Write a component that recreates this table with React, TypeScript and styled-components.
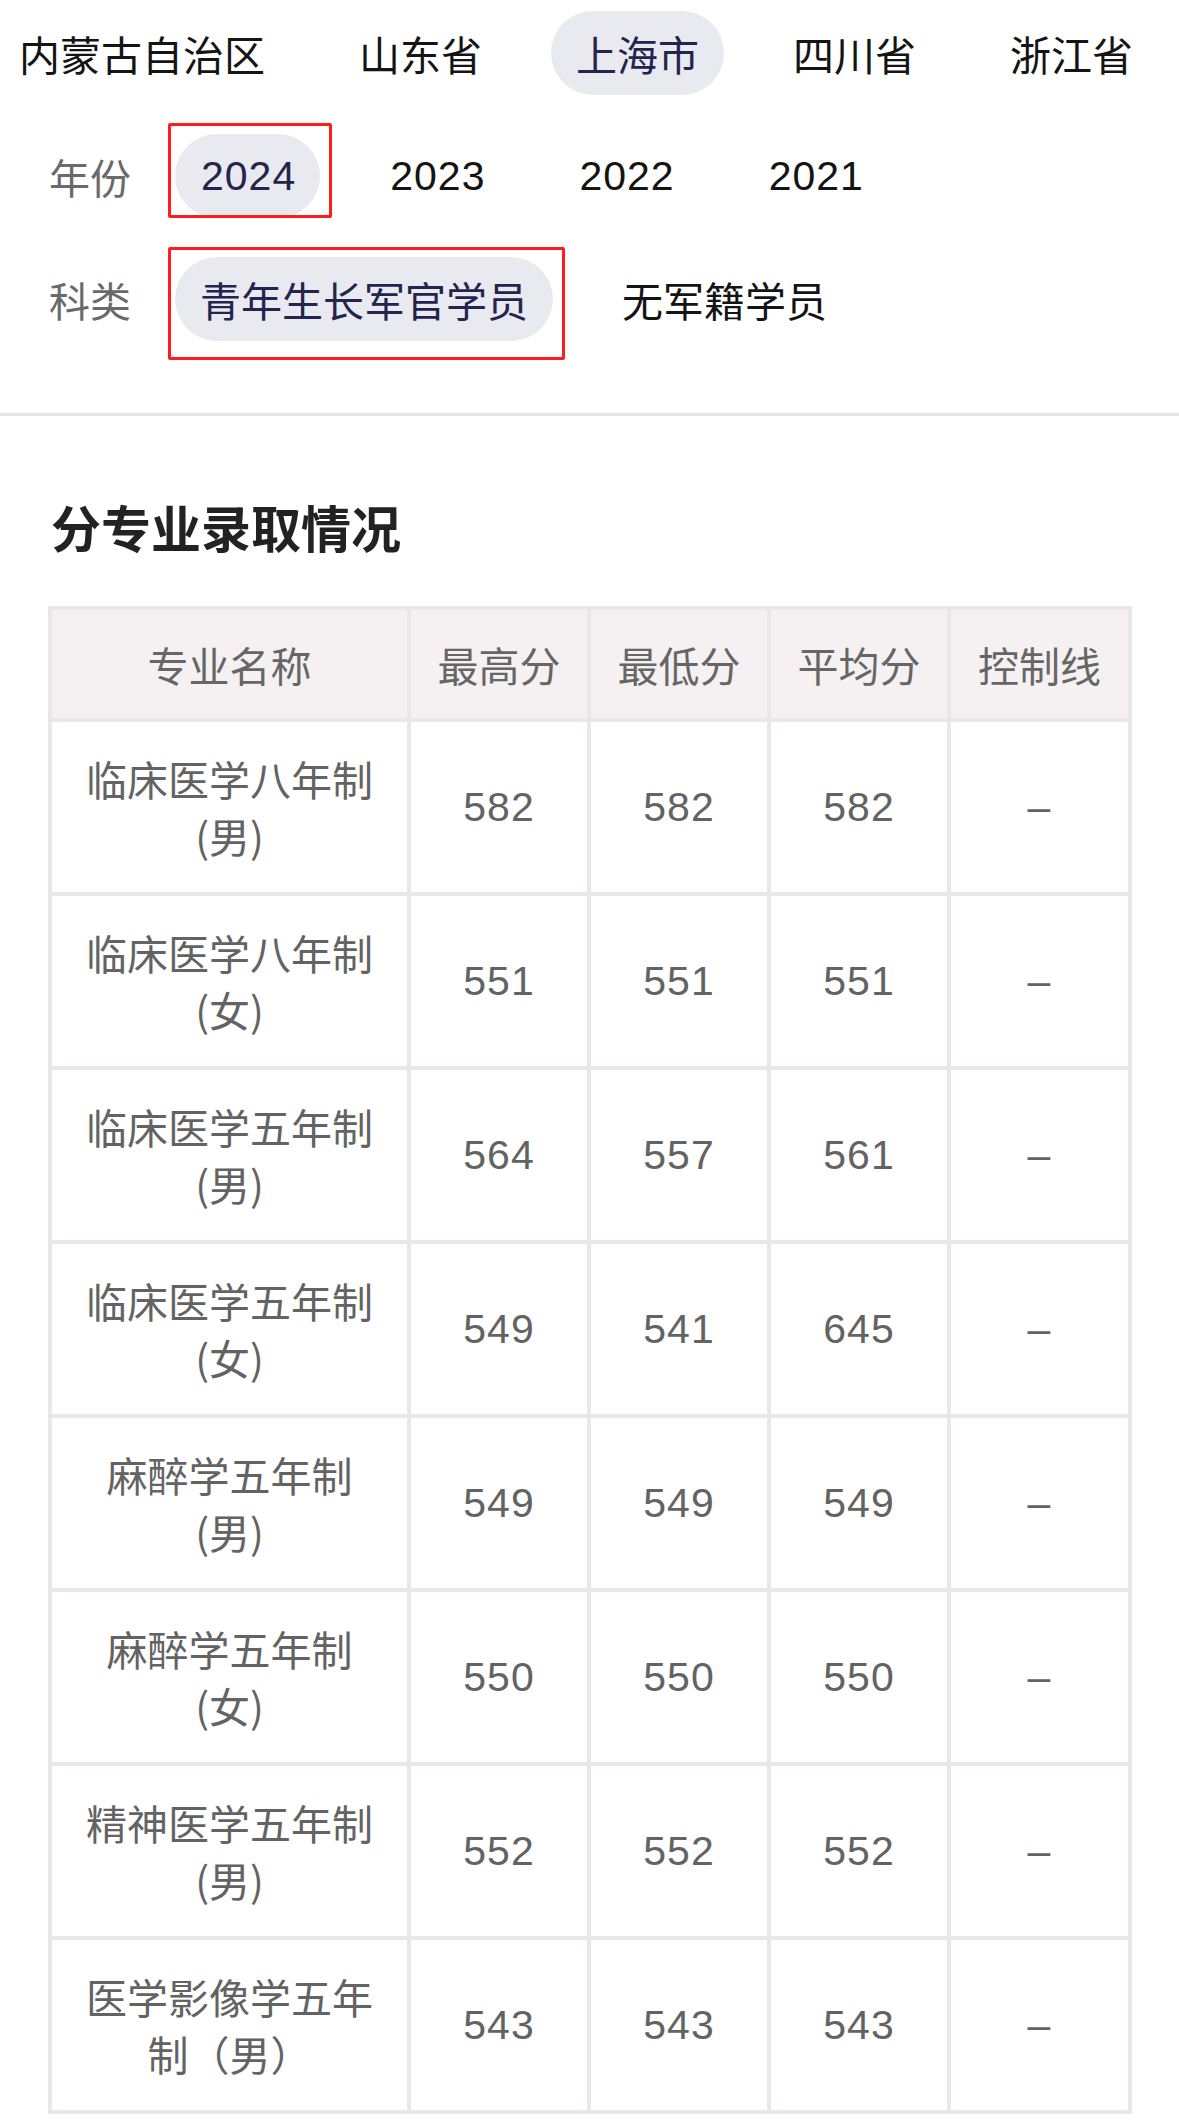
import React from "react";
import styled, { createGlobalStyle } from "styled-components";

const GlobalStyle = createGlobalStyle`
  html, body {
    margin: 0;
    padding: 0;
    background: #ffffff;
  }
  body {
    font-family: "Noto Sans", "Noto Sans CJK SC", sans-serif;
    -webkit-font-smoothing: antialiased;
  }
`;

const Page = styled.div`
  width: 1179px;
  overflow: hidden;
  background: #ffffff;
`;

const FilterPanel = styled.div`
  display: flex;
  flex-direction: column;
  gap: 39px;
  padding: 11px 0 72px;
`;

const ChipRow = styled.div<{ $indent: number }>`
  display: flex;
  align-items: center;
  gap: 44px;
  margin-left: ${(p) => p.$indent}px;
  height: 84px;
`;

const RowLabel = styled.span`
  font-family: "Noto Sans CJK SC", sans-serif;
  font-size: 41px;
  line-height: 84px;
  color: #6a6a6a;
  white-space: nowrap;
`;

const Chip = styled.span<{ $active?: boolean; $numeric?: boolean }>`
  position: relative;
  display: inline-flex;
  align-items: center;
  justify-content: center;
  height: 84px;
  padding: ${(p) => (p.$numeric ? "0 24px 0 26px" : "0 25px")};
  border-radius: 42px;
  font-family: "Liberation Sans", "Noto Sans CJK SC", sans-serif;
  font-size: 41px;
  letter-spacing: ${(p) => (p.$numeric ? "1px" : "0")};
  white-space: nowrap;
  color: ${(p) => (p.$active ? "#24244f" : "#141414")};
  background: ${(p) => (p.$active ? "#e9e9f0" : "transparent")};
`;

const Annotation = styled.span<{ $t: number; $r: number; $b: number; $l: number }>`
  position: absolute;
  top: ${(p) => p.$t}px;
  right: ${(p) => p.$r}px;
  bottom: ${(p) => p.$b}px;
  left: ${(p) => p.$l}px;
  border: 3px solid #ff1c1c;
  border-radius: 2px;
  pointer-events: none;
`;

const Divider = styled.div`
  height: 3px;
  background: #e6e6e6;
`;

const Section = styled.section`
  padding: 80px 0 40px 48px;
`;

const SectionTitle = styled.h2`
  margin: 0 0 50px;
  padding-left: 3px;
  font-family: "Noto Sans CJK SC", sans-serif;
  font-size: 50px;
  line-height: 60px;
  font-weight: 700;
  color: #222222;
`;

const ScoreTable = styled.table`
  width: 1080px;
  table-layout: fixed;
  border-collapse: collapse;
  border: 4px solid #ebe7e8;
`;

const HeadCell = styled.th`
  height: 108px;
  padding: 0;
  border: 4px solid #ebe7e8;
  background: #f5f1f2;
  font-family: "Noto Sans CJK SC", sans-serif;
  font-size: 41px;
  font-weight: 400;
  color: #666666;
  text-align: center;
  vertical-align: middle;
`;

const BodyCell = styled.td`
  height: 170px;
  padding: 0 20px;
  border: 4px solid #ebe7e8;
  background: #ffffff;
  font-family: "Liberation Sans", "Noto Sans CJK SC", sans-serif;
  font-size: 41px;
  letter-spacing: 1px;
  line-height: 57px;
  color: #636363;
  text-align: center;
  vertical-align: middle;
`;

const NameLine = styled.div`
  font-family: "Noto Sans CJK SC", sans-serif;
  letter-spacing: 0;
  white-space: nowrap;
`;

type Row = { name: [string, string]; max: string; min: string; avg: string; line: string };

const rows: Row[] = [
  { name: ["临床医学八年制", "(男)"], max: "582", min: "582", avg: "582", line: "–" },
  { name: ["临床医学八年制", "(女)"], max: "551", min: "551", avg: "551", line: "–" },
  { name: ["临床医学五年制", "(男)"], max: "564", min: "557", avg: "561", line: "–" },
  { name: ["临床医学五年制", "(女)"], max: "549", min: "541", avg: "645", line: "–" },
  { name: ["麻醉学五年制", "(男)"], max: "549", min: "549", avg: "549", line: "–" },
  { name: ["麻醉学五年制", "(女)"], max: "550", min: "550", avg: "550", line: "–" },
  { name: ["精神医学五年制", "(男)"], max: "552", min: "552", avg: "552", line: "–" },
  { name: ["医学影像学五年", "制（男）"], max: "543", min: "543", avg: "543", line: "–" },
];

const provinces = ["内蒙古自治区", "山东省", "上海市", "四川省", "浙江省"];
const years = ["2024", "2023", "2022", "2021"];
const kinds = ["青年生长军官学员", "无军籍学员"];

export default function App() {
  return (
    <Page>
      <GlobalStyle />
      <FilterPanel>
        <ChipRow $indent={-6}>
          {provinces.map((p) => (
            <Chip key={p} $active={p === "上海市"}>
              {p}
            </Chip>
          ))}
        </ChipRow>
        <ChipRow $indent={49}>
          <RowLabel>年份</RowLabel>
          {years.map((y) => (
            <Chip key={y} $numeric $active={y === "2024"}>
              {y}
              {y === "2024" && <Annotation $t={-11} $r={-12} $b={0} $l={-7} />}
            </Chip>
          ))}
        </ChipRow>
        <ChipRow $indent={49}>
          <RowLabel>科类</RowLabel>
          {kinds.map((k) => (
            <Chip key={k} $active={k === "青年生长军官学员"}>
              {k}
              {k === "青年生长军官学员" && <Annotation $t={-10} $r={-12} $b={-19} $l={-7} />}
            </Chip>
          ))}
        </ChipRow>
      </FilterPanel>
      <Divider />
      <Section>
        <SectionTitle>分专业录取情况</SectionTitle>
        <ScoreTable>
          <colgroup>
            <col style={{ width: 359 }} />
            <col style={{ width: 180 }} />
            <col style={{ width: 180 }} />
            <col style={{ width: 180 }} />
            <col style={{ width: 181 }} />
          </colgroup>
          <thead>
            <tr>
              <HeadCell>专业名称</HeadCell>
              <HeadCell>最高分</HeadCell>
              <HeadCell>最低分</HeadCell>
              <HeadCell>平均分</HeadCell>
              <HeadCell>控制线</HeadCell>
            </tr>
          </thead>
          <tbody>
            {rows.map((r, i) => (
              <tr key={i}>
                <BodyCell>
                  <NameLine>{r.name[0]}</NameLine>
                  <NameLine>{r.name[1]}</NameLine>
                </BodyCell>
                <BodyCell>{r.max}</BodyCell>
                <BodyCell>{r.min}</BodyCell>
                <BodyCell>{r.avg}</BodyCell>
                <BodyCell>{r.line}</BodyCell>
              </tr>
            ))}
          </tbody>
        </ScoreTable>
      </Section>
    </Page>
  );
}
